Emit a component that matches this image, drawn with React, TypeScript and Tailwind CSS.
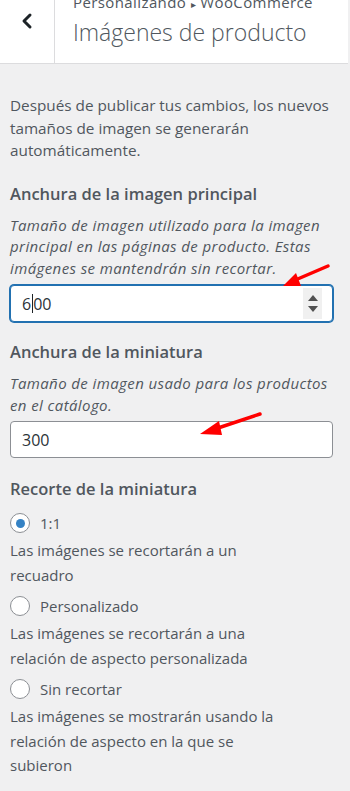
import { ChevronLeft } from 'lucide-react';

type CropOption = {
  id: string;
  label: string;
  help: string;
  checked?: boolean;
};

const cropOptions: CropOption[] = [
  { id: 'square', label: '1:1', help: 'Las imágenes se recortarán a un recuadro', checked: true },
  { id: 'custom', label: 'Personalizado', help: 'Las imágenes se recortarán a una relación de aspecto personalizada' },
  { id: 'uncropped', label: 'Sin recortar', help: 'Las imágenes se mostrarán usando la relación de aspecto en la que se subieron' },
];

function Radio({ checked }: { checked?: boolean }) {
  return (
    <span className="flex h-[20px] w-[20px] shrink-0 items-center justify-center rounded-full border border-[#8c8f94] bg-white">
      {checked && <span className="h-[9px] w-[9px] rounded-full bg-[#3582c4]" />}
    </span>
  );
}

function Arrows() {
  // flechas rojas dibujadas encima de la captura
  return (
    <svg className="pointer-events-none absolute left-0 top-0" width="350" height="791" viewBox="0 0 350 791">
      <line x1="328" y1="266" x2="293" y2="281" stroke="#f00" strokeWidth="3.5" strokeLinecap="round" />
      <polygon points="283,286 296,273 301,286" fill="#f00" />
      <line x1="260" y1="414" x2="212" y2="430" stroke="#f00" strokeWidth="3.5" strokeLinecap="round" />
      <polygon points="200,434 219,421 222,435" fill="#f00" />
    </svg>
  );
}

export default function App() {
  return (
    <div className="relative h-[791px] w-[350px] overflow-hidden bg-[#f0f0f1] font-['Open_Sans','Noto_Sans',sans-serif] text-[#50575e]">
      {/* cabecera */}
      <div className="flex h-[64px] w-[348px] border-b border-[#dcdcde] bg-white">
        <button className="flex h-full w-[55px] shrink-0 justify-center border-r border-[#dcdcde] pt-[9px] text-[#1d2327]">
          <ChevronLeft size={24} strokeWidth={3} />
        </button>
        <div className="flex min-w-0 flex-col pl-[18px]">
          <span className="-mt-[8px] whitespace-nowrap text-[15px] leading-[20px] tracking-[0.4px] text-[#50575e]">
            Personalizando <span className="text-[10px]">▸</span> WooCommerce
          </span>
          <h1 className="mt-[3px] whitespace-nowrap text-[23px] font-light leading-[30px] text-[#50575e]">
            Imágenes de producto
          </h1>
        </div>
      </div>

      <div className="px-[10px] pt-[30px] text-[15px]">
        <p className="text-[15.3px] leading-[22.5px]">
          Después de publicar tus cambios, los nuevos tamaños de imagen se generarán automáticamente.
        </p>

        <h2 className="mt-[20px] text-[16.5px] font-semibold leading-[24px] text-[#50575e]">
          Anchura de la imagen principal
        </h2>
        <p className="mt-[9px] italic leading-[21.5px] tracking-[0.4px]">
          Tamaño de imagen utilizado para la imagen principal en las páginas de producto. Estas imágenes se mantendrán sin recortar.
        </p>
        <div className="mt-[6px] flex h-[37px] w-[323px] items-center justify-between rounded-[4px] border border-[#2271b1] bg-white pl-[11px] pr-[10px] shadow-[0_0_0_1px_#2271b1]">
          <span className="flex items-center text-[16px] text-[#2c3338]">
            6<span className="mx-[0.5px] inline-block h-[19px] w-[1px] bg-[#1d2327]" />00
          </span>
          <span className="flex h-[31px] w-[19px] flex-col items-center justify-center gap-[5px] bg-[#f0f0f0]">
            <span className="h-0 w-0 border-x-[5px] border-b-[6px] border-x-transparent border-b-[#505050]" />
            <span className="h-0 w-0 border-x-[5px] border-t-[6px] border-x-transparent border-t-[#505050]" />
          </span>
        </div>

        <h2 className="mt-[18px] text-[16.5px] font-semibold leading-[24px] text-[#50575e]">
          Anchura de la miniatura
        </h2>
        <p className="mt-[9px] w-[318px] italic leading-[21.5px] tracking-[0.4px]">
          Tamaño de imagen usado para los productos en el catálogo.
        </p>
        <div className="mt-[5px] flex h-[37px] w-[323px] items-center rounded-[4px] border border-[#8c8f94] bg-white pl-[11px] text-[16px] text-[#2c3338]">
          300
        </div>

        <h2 className="mt-[19px] text-[16.5px] font-semibold leading-[24px] text-[#50575e]">
          Recorte de la miniatura
        </h2>
        <div className="mt-[10px] flex flex-col gap-[7px]">
          {cropOptions.map((opt) => (
            <div key={opt.id}>
              <label className="flex items-center gap-[10px] leading-[24px]">
                <Radio checked={opt.checked} />
                <span>{opt.label}</span>
              </label>
              <p className="mt-[3px] w-[280px] leading-[24.5px]">{opt.help}</p>
            </div>
          ))}
        </div>
      </div>

      <Arrows />
    </div>
  );
}
